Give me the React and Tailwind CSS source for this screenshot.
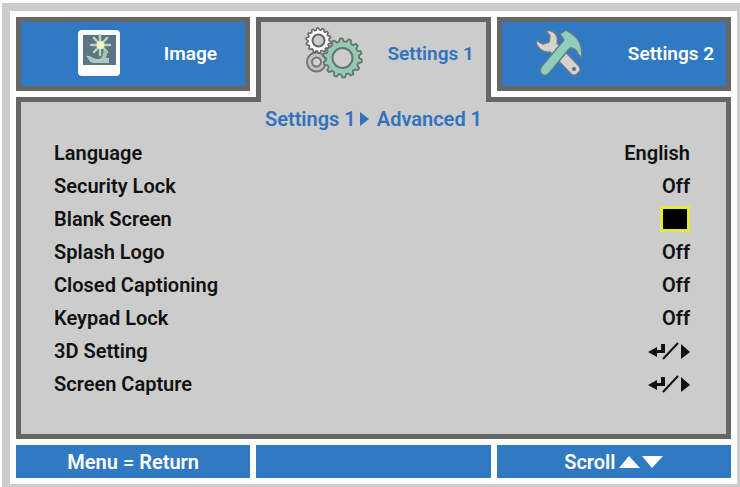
import React, { useState } from 'react'

const tabs = [
  { id: 'image', label: 'Image' },
  { id: 'settings1', label: 'Settings 1' },
  { id: 'settings2', label: 'Settings 2' },
]

const settings = [
  { name: 'Language', value: 'English' },
  { name: 'Security Lock', value: 'Off' },
  { name: 'Blank Screen', type: 'color' },
  { name: 'Splash Logo', value: 'Off' },
  { name: 'Closed Captioning', value: 'Off' },
  { name: 'Keypad Lock', value: 'Off' },
  { name: '3D Setting', type: 'enter' },
  { name: 'Screen Capture', type: 'enter' },
]

const ImageIcon = () => (
  <svg width="42" height="46" viewBox="0 0 42 46" aria-hidden="true">
    <rect width="42" height="46" rx="4" fill="#fff" />
    <rect x="5" y="5" width="33" height="30" fill="#5c7484" />
    <path d="M22 5v20M13 15h19M16 8l13 14M29 8L16 22" stroke="#b4d6bd" strokeWidth="2.500" strokeLinecap="round" />
    <circle cx="22.500" cy="15" r="4" fill="#f1f4c0" />
    <path d="M27 20c2 4-2 6-2 10" stroke="#9cc7ad" strokeWidth="4" fill="none" />
    <path d="M8 26c5-1 7 3 11 3 4 0 6-2 12-1v5H15c-4-1-4-4-7-7z" fill="#a5cbc0" />
  </svg>
)

// outline of a gear: each tooth goes up, across and down again
const gearPoints = (cx, cy, inner, outer, teeth) => {
  const points = []
  for (let i = 0; i < teeth; i++) {
    const steps = [[0, inner], [0.2, outer], [0.5, outer], [0.7, inner]]
    steps.forEach(([offset, r]) => {
      const angle = ((i + offset) / teeth) * Math.PI * 2
      points.push(`${cx + r * Math.cos(angle)},${cy + r * Math.sin(angle)}`)
    })
  }
  return points.join(' ')
}

const GearsIcon = () => (
  <svg width="58" height="52" viewBox="0 0 58 52" strokeLinejoin="round" aria-hidden="true">
    <circle cx="11.500" cy="35" r="9.500" fill="#c2c2c2" stroke="#777" strokeWidth="2" />
    <circle cx="11.500" cy="35" r="4.500" fill="#d2d2d2" stroke="#777" strokeWidth="2" />
    <polygon points={gearPoints(37.5, 31, 16.5, 19.5, 14)} fill="#94c9b5" stroke="#66766f" strokeWidth="1.800" />
    <circle cx="37.500" cy="31" r="10" fill="#ccc" stroke="#66766f" strokeWidth="2" />
    <polygon points={gearPoints(13.5, 13.5, 10.5, 12.5, 14)} fill="#fff" stroke="#666" strokeWidth="1.500" />
    <circle cx="13.500" cy="13.500" r="6" fill="#ccc" stroke="#666" strokeWidth="2" />
  </svg>
)

const ToolsIcon = () => (
  <svg width="48" height="48" viewBox="0 0 48 48" strokeLinejoin="round" aria-hidden="true">
    {/* wrench */}
    <path
      d="M11 2c8-2 13 5 11 12l21 22c3 3 3 6 0 8-2 3-6 3-8 0L15 23C8 24 1 19 1 11l7 4 6-2 1-6z"
      fill="#d8d2ce"
      stroke="#6b7a84"
      strokeWidth="1.500"
    />
    <circle cx="39" cy="40" r="2" fill="#5d6d78" />
    {/* hammer */}
    <path
      d="M25 5l6-4 6 4c8 5 10 12 10 24l-4-4c-2-5-4-6-8-6L15 43c-3 4-6 4-8 2-3-2-2-5 0-8l22-26z"
      fill="#91cdbb"
      stroke="#5d7f8a"
      strokeWidth="1.500"
    />
  </svg>
)

const EnterIcon = () => (
  <svg width="42" height="18" viewBox="0 0 42 18" role="img" aria-label="Enter or right">
    <path d="M0 10l9-5v3h4V2h4v9H9v4z" fill="#111" />
    <path d="M15 17L30 1" stroke="#111" strokeWidth="2" />
    <path d="M33 2v15l9-7z" fill="#111" />
  </svg>
)

const TabButton = ({ tab, active, onSelect }) => (
  <button
    type="button"
    role="tab"
    aria-selected={active}
    onClick={() => onSelect(tab.id)}
    className={`flex border-5 border-[#666] ${
      active
        ? 'relative z-10 -mb-[11px] pb-[11px] h-[85px] border-b-0 bg-[#ccc] text-[#3173bd]'
        : 'h-[74px] bg-[#3079c3] text-white'
    }`}
  >
    <span
      className={`flex h-[62px] flex-1 items-center justify-center ${
        tab.id === 'image' ? 'pl-[42px]' : tab.id === 'settings1' ? 'pl-8' : ''
      }`}
    >
      {tab.id === 'image' && <ImageIcon />}
      {tab.id === 'settings1' && <GearsIcon />}
      {tab.id === 'settings2' && <ToolsIcon />}
    </span>
    <span className="flex h-16 w-[110px] items-center justify-center whitespace-nowrap">{tab.label}</span>
  </button>
)

const SettingValue = ({ item }) => {
  if (item.type === 'color') {
    return <button type="button" aria-label="Blank screen color" className="h-[26px] w-[30px] border-3 border-[#e5e83a] bg-black" />
  }
  if (item.type === 'enter') {
    return <EnterIcon />
  }
  return <span>{item.value}</span>
}

const App = () => {
  const [activeTab, setActiveTab] = useState('settings1')
  return (
    <div className="bg-white pt-[3px] pl-[2px] font-['Roboto',sans-serif] text-[20px] font-semibold">
      <div className="bg-[#ccc] pt-2 pl-2 pr-[3px] pb-[3px]">
        <main className="flex flex-col gap-[6px] bg-white p-[6px]">
          <div role="tablist" className="grid grid-cols-3 items-start gap-[6px] text-[19px]">
            {tabs.map((tab) => (
              <TabButton key={tab.id} tab={tab} active={tab.id === activeTab} onSelect={setActiveTab} />
            ))}
          </div>
          <section className="border-5 border-[#666] bg-[#ccc] pb-[34px] text-[#111]">
            <h1 className="flex h-[34px] items-center justify-center gap-2 text-[#3173bd]">
              <span className="flex items-center gap-1">
                Settings 1
                <svg width="9" height="16" viewBox="0 0 9 16" aria-hidden="true">
                  <path d="M0 1v14l9-7z" fill="currentColor" />
                </svg>
              </span>
              <span>Advanced 1</span>
            </h1>
            <ul className="pr-[36px] pl-[33px]">
              {settings.map((item) => (
                <li key={item.name} className="flex h-[33px] items-center justify-between">
                  <span>{item.name}</span>
                  <SettingValue item={item} />
                </li>
              ))}
            </ul>
          </section>
          <footer className="grid h-[33px] grid-cols-3 gap-[6px] text-white">
            <div className="flex items-center justify-center bg-[#3079c3]">Menu = Return</div>
            <div className="bg-[#3079c3]"></div>
            <div className="flex items-center justify-center gap-1 bg-[#3079c3]">
              Scroll
              <svg width="44" height="12" viewBox="0 0 44 12" fill="currentColor" aria-hidden="true">
                <path d="M10 0l11 12H0z" />
                <path d="M23 0h21L33 12z" />
              </svg>
            </div>
          </footer>
        </main>
      </div>
    </div>
  )
}

export default App
